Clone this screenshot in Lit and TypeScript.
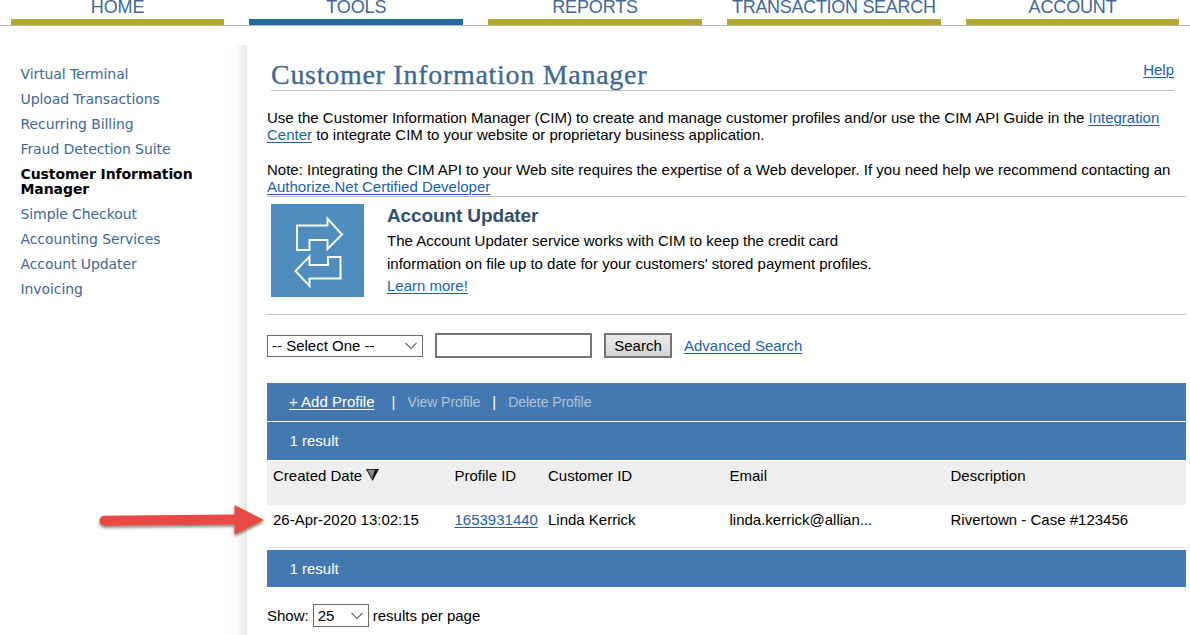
import { LitElement, html, css, svg } from "lit";
import { customElement } from "lit/decorators.js";
import { classMap } from "lit/directives/class-map.js";

const TABS = [
  { label: "HOME", active: false },
  { label: "TOOLS", active: true },
  { label: "REPORTS", active: false },
  { label: "TRANSACTION SEARCH", active: false },
  { label: "ACCOUNT", active: false },
];

const LINKS = [
  "Virtual Terminal",
  "Upload Transactions",
  "Recurring Billing",
  "Fraud Detection Suite",
  "Customer Information Manager",
  "Simple Checkout",
  "Accounting Services",
  "Account Updater",
  "Invoicing",
];

const chevron = html`<svg class="chevron" width="14" height="8" viewBox="0 0 14 8">
  <path d="M1.5 1 L7 6.5 L12.5 1" fill="none" stroke="#666" stroke-width="1.1" />
</svg>`;

@customElement("app-root")
export class AppRoot extends LitElement {
  static styles = css`
    :host {
      display: block;
      position: relative;
      width: 1190px;
      height: 635px;
      overflow: hidden;
      background: #fff;
      color: #000;
      font: 15px/17px "Liberation Sans", Arial, sans-serif;
      white-space: nowrap;
    }
    * { box-sizing: border-box; }
    a { color: #1a5fb8; text-decoration: underline; text-decoration-thickness: 1px; text-underline-offset: 2px; }
    .tabs {
      display: flex;
      gap: 25px;
      height: 26px;
      padding-left: 10.7px;
      border-bottom: 1px solid #b5b5b5;
    }
    .tab {
      width: 213.75px;
      height: 25px;
      flex: none;
      border-bottom: 6px solid #b2a92f;
      color: #40689a;
      font-size: 18px;
      line-height: 14px;
      letter-spacing: -0.15px;
      text-align: center;
    }
    .tab.long { letter-spacing: -0.3px; }
    .tab.on { border-color: #226a99; }
    .page { display: flex; padding-top: 19px; height: 609px; }
    .side {
      width: 247px;
      flex: none;
      padding: 22px 40px 0 20.5px;
      background: linear-gradient(90deg, #fff 0, #fff 224px, #fbfbfb 236px, #e8e8e8 247px);
      font: 14px/15px "DejaVu Sans", Verdana, sans-serif;
      color: #40689a;
      display: flex;
      flex-direction: column;
      gap: 10px;
      white-space: normal;
    }
    .item { letter-spacing: -0.09px; }
    .item.on { color: #000; font-weight: bold; letter-spacing: -0.08px; }
    .main { margin-left: 20px; width: 919px; }
    .head {
      margin: 0 12px 0 4px;
      height: 46px;
      border-bottom: 1px solid #bfbfbf;
      display: flex;
      justify-content: space-between;
    }
    h1 {
      margin: 14px 0 0;
      font: 28px/32px "Liberation Serif", Georgia, serif;
      letter-spacing: 0.72px;
      -webkit-text-stroke: 0.3px #3d6894;
      color: #3d6894;
    }
    .help { margin-top: 16px; }
    .intro { height: 105px; padding-top: 18px; }
    .intro p { margin: 0 0 18px; letter-spacing: -0.005px; }
    .promo {
      height: 119px;
      border-top: 1px solid #bfbfbf;
      border-bottom: 1px solid #bfbfbf;
      padding: 7px 0 0 4px;
      display: flex;
      gap: 23px;
    }
    .promo h2 { margin: 0; font-size: 19px; line-height: 24px; letter-spacing: -0.12px; color: #2f5070; }
    .promo p { margin: 1px 0 0; line-height: 23px; }
    .promo a { display: inline-block; line-height: 21px; }
    .search { display: flex; align-items: center; height: 25px; margin-top: 18px; }
    .select {
      display: flex;
      align-items: center;
      justify-content: space-between;
      border: 1px solid #6b6b6b;
      padding: 0 4px 0 4px;
    }
    .kind { width: 156px; height: 22px; }
    .query { width: 157px; height: 25px; border: 2px solid #767676; margin-left: 12px; background: #fff; padding: 0; }
    .go {
      width: 68px;
      height: 25px;
      margin: 0 12px;
      padding: 0;
      border: 2px solid #767676;
      background: linear-gradient(#ececec, #d4d4d4);
      font: inherit;
    }
    .bar {
      background: #4378b2;
      color: #fff;
      height: 38px;
      padding: 0 0 1px 22.5px;
      display: flex;
      align-items: center;
      margin-bottom: 1px;
    }
    .actions { margin-top: 25px; padding: 0 0 2px 22px; }
    .actions a { color: #fff; }
    .actions .sep { margin-left: 17px; width: 4px; text-align: center; }
    .actions .off { color: #b4c2d3; font-size: 14px; letter-spacing: -0.07px; margin-left: 12px; padding-top: 2px; }
    .actions .second { margin-left: 12px; }
    .row { display: grid; grid-template-columns: 181.5px 93.5px 181.5px 221px 1fr; padding-left: 6px; }
    .header { background: #eee; height: 44px; padding-top: 6px; }
    .record { height: 43px; padding-top: 6px; border-bottom: 1px solid #e8e8ec; }
    .foot { margin-top: 2px; height: 37px; padding-bottom: 0; }
    .paging { display: flex; align-items: center; height: 23px; margin-top: 17px; }
    .size { width: 56px; height: 23px; margin: 0 4px; }
    .arrow { position: absolute; left: 90px; top: 495px; }
  `;

  private renderSide() {
    return html`<nav class="side">
      ${LINKS.map(
        (l) => html`<div class=${classMap({ item: true, on: l === "Customer Information Manager" })}>${l}</div>`
      )}
    </nav>`;
  }

  private renderUpdaterIcon() {
    return html`<svg width="93" height="93" viewBox="0 0 93 93">
      <rect width="93" height="93" fill="#4e8dbe" />
      ${svg`<g fill="none" stroke="#f4fafd" stroke-width="2">
        <path d="M26 21.5 H56.5 V14.5 L71 30.5 L56.5 45 V36 H38.5 V46 H26 Z" />
        <path d="M69.5 74.5 H38.5 V82 L24.5 67 L38.5 52.5 V61 H57 V53 H69.5 Z" />
      </g>`}
    </svg>`;
  }

  render() {
    return html`
      <div class="tabs">
        ${TABS.map(
          (t) =>
            html`<div class=${classMap({ tab: true, on: t.active, long: t.label.length > 10 })}>${t.label}</div>`
        )}
      </div>
      <div class="page">
        ${this.renderSide()}
        <main class="main">
          <div class="head"><h1>Customer Information Manager</h1><a class="help">Help</a></div>
          <div class="intro">
            <p>
              Use the Customer Information Manager (CIM) to create and manage customer profiles and/or use the CIM API
              Guide in the <a>Integration<br />Center</a> to integrate CIM to your website or proprietary business
              application.
            </p>
            <p>
              Note: Integrating the CIM API to your Web site requires the expertise of a Web developer. If you need help
              we recommend contacting an<br /><a>Authorize.Net Certified Developer</a>
            </p>
          </div>
          <section class="promo">
            ${this.renderUpdaterIcon()}
            <div>
              <h2>Account Updater</h2>
              <p>
                The Account Updater service works with CIM to keep the credit card<br />information on file up to date
                for your customers' stored payment profiles.
              </p>
              <a>Learn more!</a>
            </div>
          </section>
          <div class="search">
            <div class="select kind"><span>-- Select One --</span>${chevron}</div>
            <input class="query" />
            <button class="go">Search</button>
            <a>Advanced Search</a>
          </div>
          <div class="bar actions">
            <a>+ Add Profile</a><span class="sep">|</span><span class="off">View Profile</span
            ><span class="sep second">|</span><span class="off">Delete Profile</span>
          </div>
          <div class="bar">1 result</div>
          <div class="row header">
            <span
              >Created Date
              <svg width="13" height="12" viewBox="0 0 13 12">
                <path d="M0 0 H13 L6.5 12 Z" fill="#111" />
                <path d="M1.5 .8 H9 L6 9.5 Z" fill="#888" /></svg
            ></span>
            <span>Profile ID</span><span>Customer ID</span><span>Email</span><span>Description</span>
          </div>
          <div class="row record">
            <span>26-Apr-2020 13:02:15</span><span><a>1653931440</a></span><span>Linda Kerrick</span
            ><span>linda.kerrick@allian...</span><span>Rivertown - Case #123456</span>
          </div>
          <div class="bar foot">1 result</div>
          <div class="paging">
            <span>Show:</span>
            <div class="select size"><span>25</span>${chevron}</div>
            <span>results per page</span>
          </div>
        </main>
      </div>
      <svg class="arrow" width="180" height="50" viewBox="0 0 180 50">
        <defs>
          <filter id="shade" x="-10%" y="-20%" width="120%" height="150%">
            <feDropShadow dx="0" dy="2" stdDeviation="1.5" flood-color="#000" flood-opacity=".5" />
          </filter>
        </defs>
        <path
          filter="url(#shade)"
          fill="#e84a44"
          d="M14.5 20.8 L144.5 19.5 V10 L174 25 L144.5 39.5 V29.5 L14.5 30.8 A5 5 0 0 1 14.5 20.8 Z"
        />
      </svg>
    `;
  }
}
